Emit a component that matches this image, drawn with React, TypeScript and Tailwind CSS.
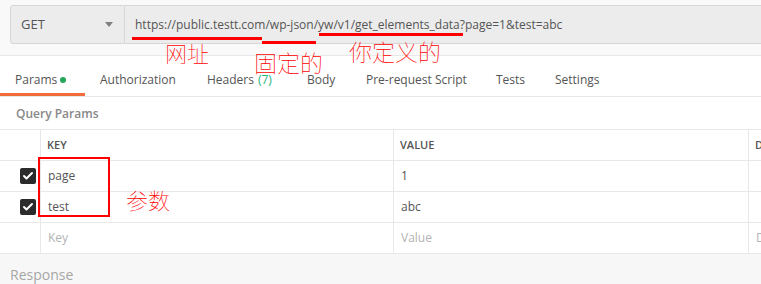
import { Check } from 'lucide-react';

const tabs = [
  { label: 'Params', w: 'w-[85px]', active: true, dot: true },
  { label: 'Authorization', w: 'w-[107px]' },
  { label: 'Headers', w: 'w-[100px]', count: '(7)' },
  { label: 'Body', w: 'w-[59px]' },
  { label: 'Pre-request Script', w: 'w-[130px]' },
  { label: 'Tests', w: 'w-[59px]' },
  { label: 'Settings', w: 'w-[100px]' },
];

const rows = [
  { key: 'page', value: '1', checked: true },
  { key: 'test', value: 'abc', checked: true },
];

function CheckBox() {
  return (
    <div className="w-[16px] h-[16px] rounded-[2px] bg-[#2b2b2b] flex items-center justify-center">
      <Check className="w-[12px] h-[12px] text-white" strokeWidth={4} />
    </div>
  );
}

export default function App() {
  const cjk = "font-['Noto_Sans_CJK_SC',sans-serif] font-thin text-[#ff0000] leading-none";

  return (
    <div className="relative w-[761px] h-[284px] overflow-hidden bg-white font-['Open_Sans','Liberation_Sans',sans-serif] text-[#555555]">
      {/* URL bar */}
      <div className="h-[56px] bg-[#f9f9f9] border-b border-[#e8e8e8] pl-[10px] pt-[5px]">
        <div className="flex h-[39px]">
          <div className="w-[115px] shrink-0 flex items-center justify-between pl-[10px] pr-[11px] bg-[#ececec] border border-[#d6d6d6] rounded-l-[3px] text-[13px]">
            <span>GET</span>
            <svg width="8" height="5" viewBox="0 0 8 5">
              <path d="M0 0h8L4 5z" fill="#808080" />
            </svg>
          </div>
          <div className="flex-1 flex items-center pl-[10px] bg-[#ececec] border-y border-[#d6d6d6] text-[12px] whitespace-nowrap">
            https://public.testt.com/wp-json/yw/v1/get_elements_data?page=1&amp;test=abc
          </div>
        </div>
      </div>

      {/* Tabs */}
      <div className="flex h-[41px] border-b border-[#e8e8e8] text-[12px] whitespace-nowrap">
        {tabs.map((t) => (
          <div
            key={t.label}
            className={`${t.w} shrink-0 flex items-center pl-[15px] pt-[10px] border-b-[3px] ${
              t.active ? 'border-[#f26b3a]' : 'border-transparent'
            }`}
          >
            <span>{t.label}</span>
            {t.dot && <span className="ml-[3px] w-[6px] h-[6px] rounded-full bg-[#26a65b]" />}
            {t.count && <span className="ml-[4px] text-[#26b47f]">{t.count}</span>}
          </div>
        ))}
      </div>

      {/* Query params title */}
      <div className="h-[33px] border-b border-[#e8e8e8] flex items-center pl-[16px] pt-[2px] text-[12px] font-semibold text-[#888888]">
        Query Params
      </div>

      {/* Table */}
      <div className="grid grid-cols-[40px_353px_355px_1fr] text-[12px]">
        <div className="h-[31px] border-b border-[#e8e8e8]" />
        <div className="h-[31px] border-b border-l border-[#e8e8e8] pl-[6px] flex items-center text-[11px] font-semibold">KEY</div>
        <div className="h-[31px] border-b border-l border-[#e8e8e8] pl-[6px] flex items-center text-[11px] font-semibold">VALUE</div>
        <div className="h-[31px] border-b border-l border-[#e8e8e8] pl-[6px] flex items-center text-[11px] font-semibold">DESCRIPTION</div>

        {rows.map((r) => (
          <div key={r.key} className="contents">
            <div className="h-[31px] border-b border-[#e8e8e8] flex items-center justify-end pr-[4px]">
              {r.checked && <CheckBox />}
            </div>
            <div className="h-[31px] border-b border-l border-[#e8e8e8] pl-[7px] flex items-center">{r.key}</div>
            <div className="h-[31px] border-b border-l border-[#e8e8e8] pl-[7px] flex items-center">{r.value}</div>
            <div className="h-[31px] border-b border-l border-[#e8e8e8]" />
          </div>
        ))}

        <div className="h-[31px] border-b border-[#e8e8e8]" />
        <div className="h-[31px] border-b border-l border-[#e8e8e8] pl-[7px] flex items-center text-[#b3b3b3]">Key</div>
        <div className="h-[31px] border-b border-l border-[#e8e8e8] pl-[7px] flex items-center text-[#b3b3b3]">Value</div>
        <div className="h-[31px] border-b border-l border-[#e8e8e8] pl-[7px] flex items-center text-[#b3b3b3]">Description</div>
      </div>

      {/* Response */}
      <div className="h-[30px] bg-[#f7f7f7] pl-[10px] pt-[11px] text-[14px] leading-[20px] text-[#a6a6a6]">Response</div>

      {/* Red annotations */}
      <div className="absolute left-[132px] top-[37px] w-[130px] h-[3px] bg-[#ff0000]" />
      <div className="absolute left-[262px] top-[41px] w-[54px] h-[3px] bg-[#ff0000]" />
      <div className="absolute left-[319px] top-[33px] w-[144px] h-[3px] bg-[#ff0000]" />
      <div className={`absolute left-[165px] top-[41px] text-[22px] ${cjk}`}>网址</div>
      <div className={`absolute left-[254px] top-[51px] text-[23px] ${cjk}`}>固定的</div>
      <div className={`absolute left-[349px] top-[40px] text-[23px] ${cjk}`}>你定义的</div>
      <div className={`absolute left-[126px] top-[188px] text-[22px] ${cjk}`}>参数</div>
      <div className="absolute left-[38px] top-[157px] w-[72px] h-[60px] border-2 border-[#ff0000]" />
    </div>
  );
}
